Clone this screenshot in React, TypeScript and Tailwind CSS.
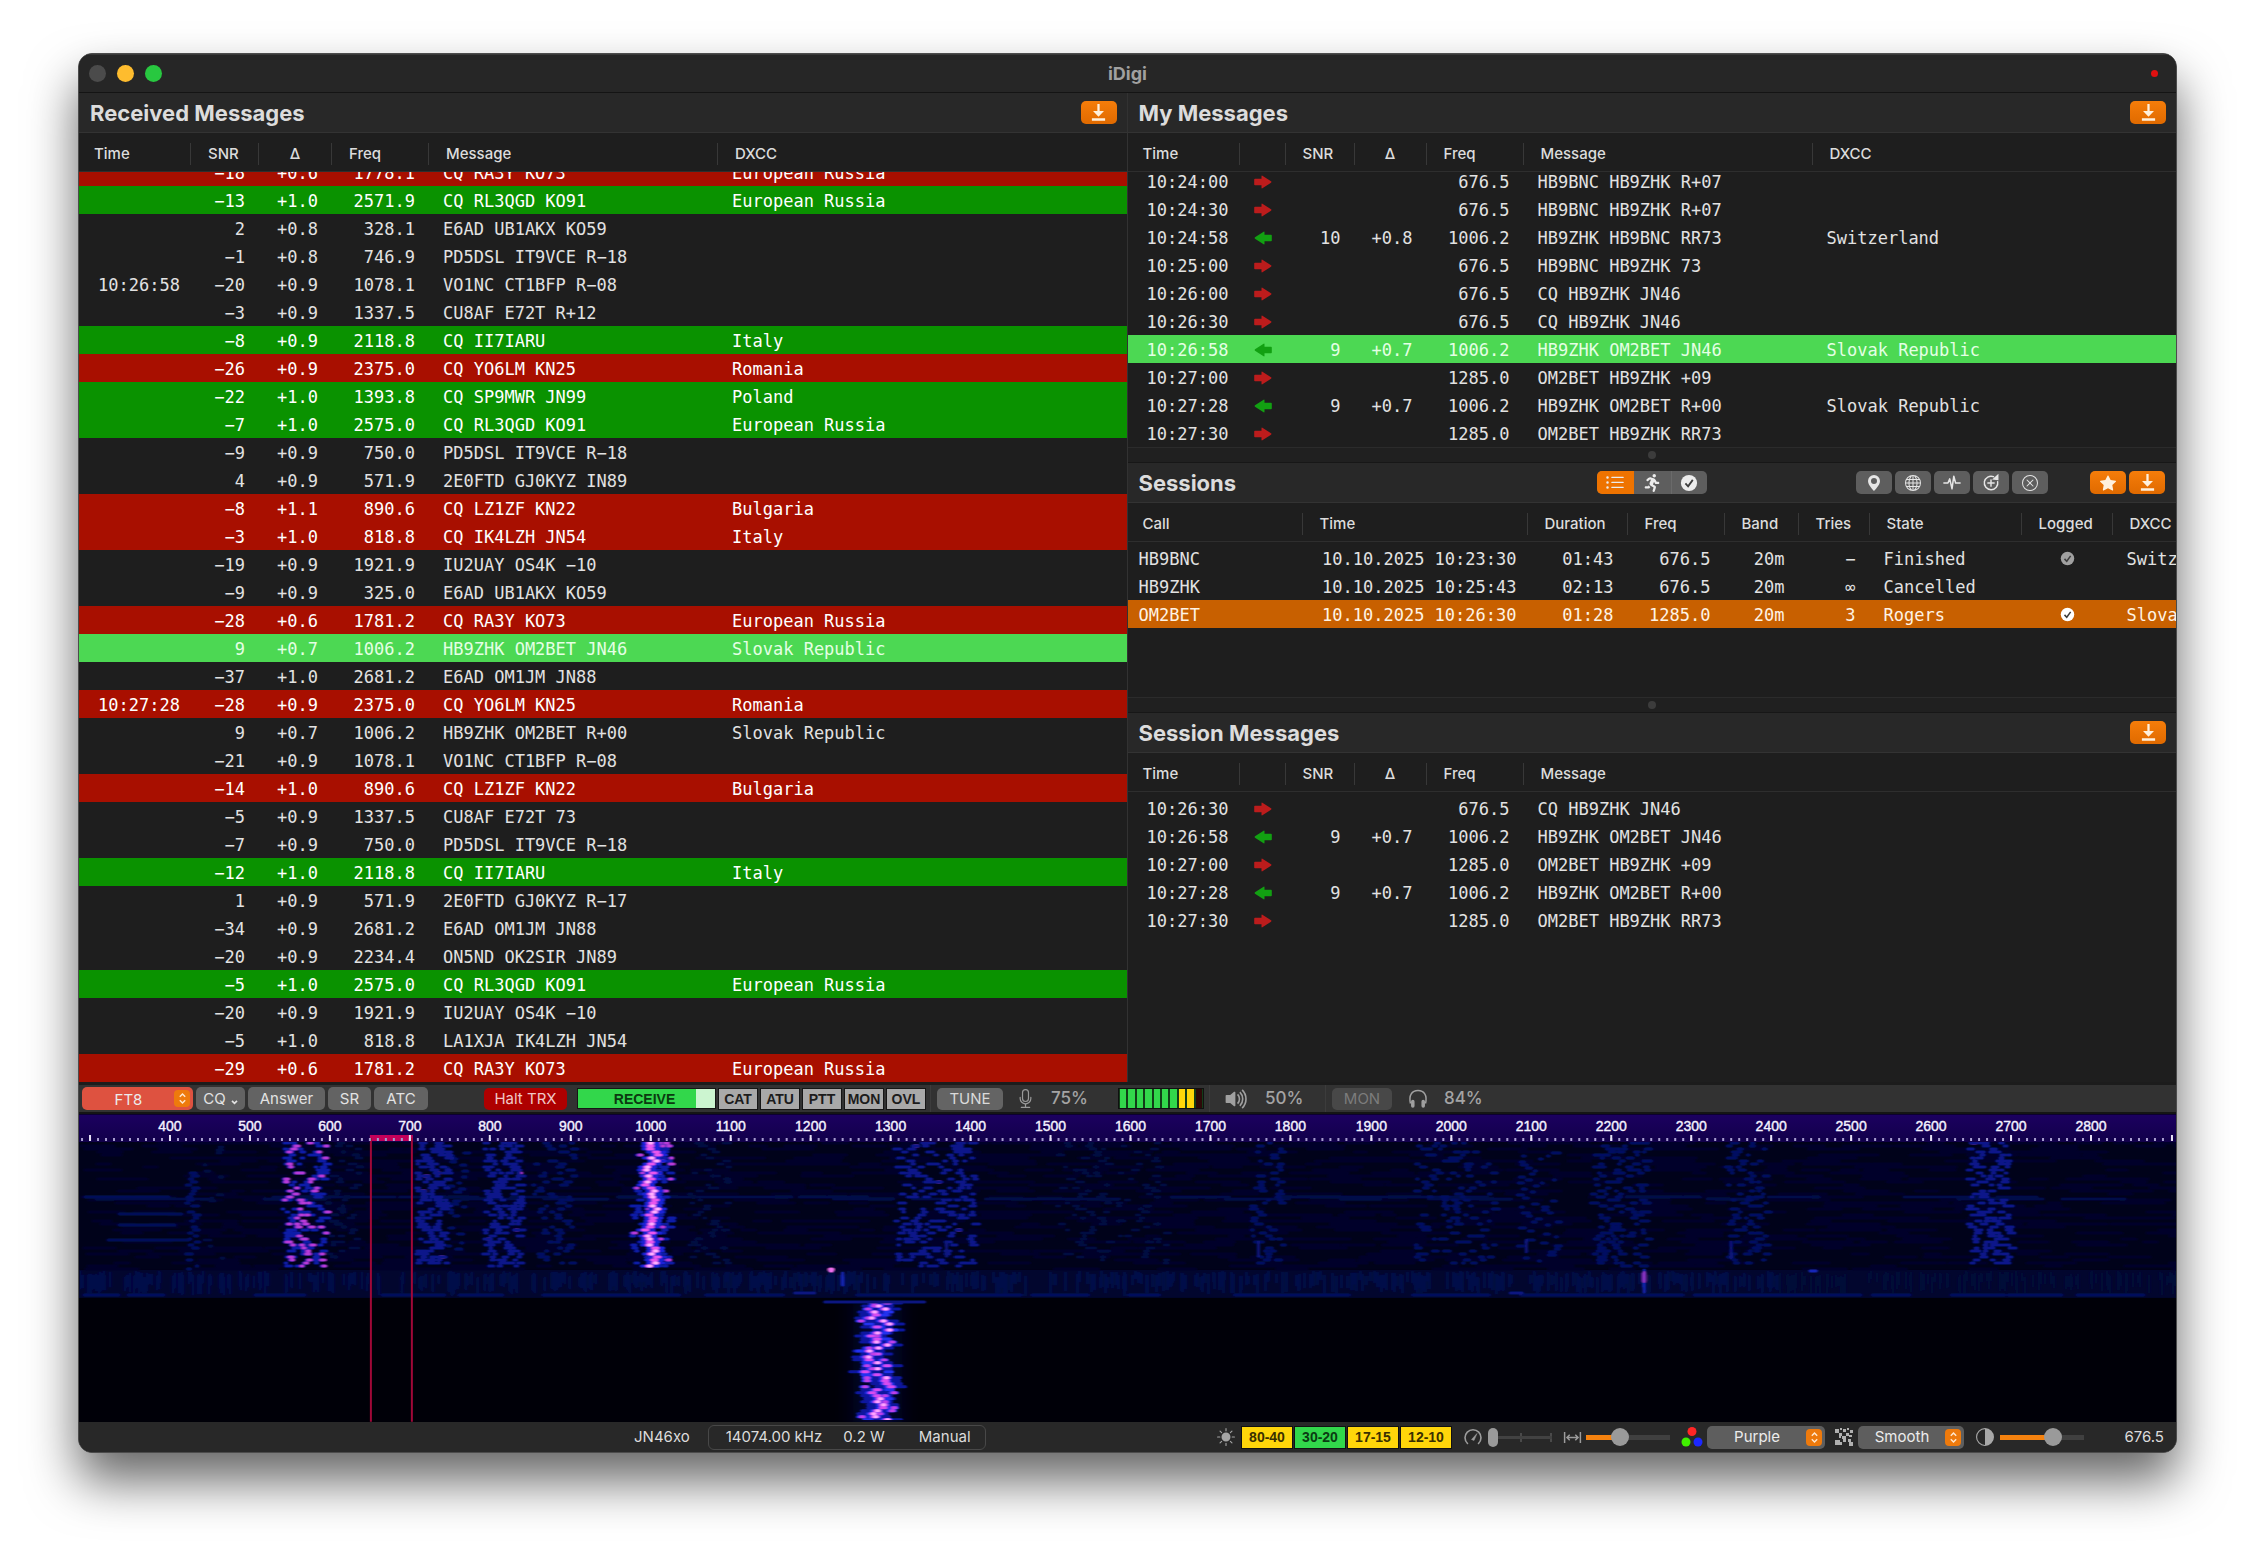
import { useState } from "react";
import type { ReactNode } from "react";
import {
  BsCircleHalf,
  BsGeoAltFill,
  BsGlobe,
  BsListUl,
  BsMic,
  BsStarFill,
  BsSunFill,
  BsVolumeUpFill,
  BsXCircle,
} from "react-icons/bs";
import { FaRunning } from "react-icons/fa";

type Tone = "red" | "green" | "active" | "orange" | "none";

const toneClass: Record<Tone, string> = {
  red: "bg-[#a80f00] text-white",
  green: "bg-[#0a9200] text-white",
  active: "bg-[#4cd853] text-[#e4ffe4]",
  orange: "bg-[#c86000] text-[#fff3e4]",
  none: "text-[#e2e2e2]",
};

interface Received {
  time?: string;
  snr: string;
  delta: string;
  freq: string;
  message: string;
  dxcc?: string;
  tone?: Tone;
}

const received: Received[] = [
  { snr: "−18", delta: "+0.6", freq: "1778.1", message: "CQ RA3Y KO73", dxcc: "European Russia", tone: "red" },
  { snr: "−13", delta: "+1.0", freq: "2571.9", message: "CQ RL3QGD KO91", dxcc: "European Russia", tone: "green" },
  { snr: "2", delta: "+0.8", freq: "328.1", message: "E6AD UB1AKX KO59" },
  { snr: "−1", delta: "+0.8", freq: "746.9", message: "PD5DSL IT9VCE R−18" },
  { time: "10:26:58", snr: "−20", delta: "+0.9", freq: "1078.1", message: "VO1NC CT1BFP R−08" },
  { snr: "−3", delta: "+0.9", freq: "1337.5", message: "CU8AF E72T R+12" },
  { snr: "−8", delta: "+0.9", freq: "2118.8", message: "CQ II7IARU", dxcc: "Italy", tone: "green" },
  { snr: "−26", delta: "+0.9", freq: "2375.0", message: "CQ YO6LM KN25", dxcc: "Romania", tone: "red" },
  { snr: "−22", delta: "+1.0", freq: "1393.8", message: "CQ SP9MWR JN99", dxcc: "Poland", tone: "green" },
  { snr: "−7", delta: "+1.0", freq: "2575.0", message: "CQ RL3QGD KO91", dxcc: "European Russia", tone: "green" },
  { snr: "−9", delta: "+0.9", freq: "750.0", message: "PD5DSL IT9VCE R−18" },
  { snr: "4", delta: "+0.9", freq: "571.9", message: "2E0FTD GJ0KYZ IN89" },
  { snr: "−8", delta: "+1.1", freq: "890.6", message: "CQ LZ1ZF KN22", dxcc: "Bulgaria", tone: "red" },
  { snr: "−3", delta: "+1.0", freq: "818.8", message: "CQ IK4LZH JN54", dxcc: "Italy", tone: "red" },
  { snr: "−19", delta: "+0.9", freq: "1921.9", message: "IU2UAY OS4K −10" },
  { snr: "−9", delta: "+0.9", freq: "325.0", message: "E6AD UB1AKX KO59" },
  { snr: "−28", delta: "+0.6", freq: "1781.2", message: "CQ RA3Y KO73", dxcc: "European Russia", tone: "red" },
  { snr: "9", delta: "+0.7", freq: "1006.2", message: "HB9ZHK OM2BET JN46", dxcc: "Slovak Republic", tone: "active" },
  { snr: "−37", delta: "+1.0", freq: "2681.2", message: "E6AD OM1JM JN88" },
  { time: "10:27:28", snr: "−28", delta: "+0.9", freq: "2375.0", message: "CQ YO6LM KN25", dxcc: "Romania", tone: "red" },
  { snr: "9", delta: "+0.7", freq: "1006.2", message: "HB9ZHK OM2BET R+00", dxcc: "Slovak Republic" },
  { snr: "−21", delta: "+0.9", freq: "1078.1", message: "VO1NC CT1BFP R−08" },
  { snr: "−14", delta: "+1.0", freq: "890.6", message: "CQ LZ1ZF KN22", dxcc: "Bulgaria", tone: "red" },
  { snr: "−5", delta: "+0.9", freq: "1337.5", message: "CU8AF E72T 73" },
  { snr: "−7", delta: "+0.9", freq: "750.0", message: "PD5DSL IT9VCE R−18" },
  { snr: "−12", delta: "+1.0", freq: "2118.8", message: "CQ II7IARU", dxcc: "Italy", tone: "green" },
  { snr: "1", delta: "+0.9", freq: "571.9", message: "2E0FTD GJ0KYZ R−17" },
  { snr: "−34", delta: "+0.9", freq: "2681.2", message: "E6AD OM1JM JN88" },
  { snr: "−20", delta: "+0.9", freq: "2234.4", message: "ON5ND OK2SIR JN89" },
  { snr: "−5", delta: "+1.0", freq: "2575.0", message: "CQ RL3QGD KO91", dxcc: "European Russia", tone: "green" },
  { snr: "−20", delta: "+0.9", freq: "1921.9", message: "IU2UAY OS4K −10" },
  { snr: "−5", delta: "+1.0", freq: "818.8", message: "LA1XJA IK4LZH JN54" },
  { snr: "−29", delta: "+0.6", freq: "1781.2", message: "CQ RA3Y KO73", dxcc: "European Russia", tone: "red" },
];

interface Exchange {
  time: string;
  sent: boolean;
  snr?: string;
  delta?: string;
  freq: string;
  message: string;
  dxcc?: string;
  tone?: Tone;
}

const myMessages: Exchange[] = [
  { time: "10:24:00", sent: true, freq: "676.5", message: "HB9BNC HB9ZHK R+07" },
  { time: "10:24:30", sent: true, freq: "676.5", message: "HB9BNC HB9ZHK R+07" },
  { time: "10:24:58", sent: false, snr: "10", delta: "+0.8", freq: "1006.2", message: "HB9ZHK HB9BNC RR73", dxcc: "Switzerland" },
  { time: "10:25:00", sent: true, freq: "676.5", message: "HB9BNC HB9ZHK 73" },
  { time: "10:26:00", sent: true, freq: "676.5", message: "CQ HB9ZHK JN46" },
  { time: "10:26:30", sent: true, freq: "676.5", message: "CQ HB9ZHK JN46" },
  { time: "10:26:58", sent: false, snr: "9", delta: "+0.7", freq: "1006.2", message: "HB9ZHK OM2BET JN46", dxcc: "Slovak Republic", tone: "active" },
  { time: "10:27:00", sent: true, freq: "1285.0", message: "OM2BET HB9ZHK +09" },
  { time: "10:27:28", sent: false, snr: "9", delta: "+0.7", freq: "1006.2", message: "HB9ZHK OM2BET R+00", dxcc: "Slovak Republic" },
  { time: "10:27:30", sent: true, freq: "1285.0", message: "OM2BET HB9ZHK RR73" },
];

const sessionMessages: Exchange[] = [
  { time: "10:26:30", sent: true, freq: "676.5", message: "CQ HB9ZHK JN46" },
  { time: "10:26:58", sent: false, snr: "9", delta: "+0.7", freq: "1006.2", message: "HB9ZHK OM2BET JN46" },
  { time: "10:27:00", sent: true, freq: "1285.0", message: "OM2BET HB9ZHK +09" },
  { time: "10:27:28", sent: false, snr: "9", delta: "+0.7", freq: "1006.2", message: "HB9ZHK OM2BET R+00" },
  { time: "10:27:30", sent: true, freq: "1285.0", message: "OM2BET HB9ZHK RR73" },
];

interface Session {
  call: string;
  time: string;
  duration: string;
  freq: string;
  tries: string;
  state: string;
  logged: boolean;
  dxcc: string;
  tone?: Tone;
}

const sessions: Session[] = [
  { call: "HB9BNC", time: "10.10.2025 10:23:30", duration: "01:43", freq: "676.5", tries: "−", state: "Finished", logged: true, dxcc: "Switzerland" },
  { call: "HB9ZHK", time: "10.10.2025 10:25:43", duration: "02:13", freq: "676.5", tries: "∞", state: "Cancelled", logged: false, dxcc: "" },
  { call: "OM2BET", time: "10.10.2025 10:26:30", duration: "01:28", freq: "1285.0", tries: "3", state: "Rogers", logged: true, dxcc: "Slovak Republic", tone: "orange" },
];

const receivedCols = "grid-cols-[112px_68px_73px_97px_289px_minmax(0,1fr)]";
const exchangeCols = "grid-cols-[112px_46px_69px_72px_97px_289px_minmax(0,1fr)]";
const sessionMessageCols = "grid-cols-[112px_46px_69px_72px_97px_minmax(0,1fr)]";
const sessionCols = "grid-cols-[175px_225px_100px_97px_74px_71px_152px_91px_minmax(0,1fr)]";

export default function App() {
  return (
    <main className="flex h-screen bg-white pt-[53px] pr-[83px] pb-[111px] pl-[78px] font-[Inter,'Open_Sans',sans-serif] text-[#dcdcdc]">
      <div className="flex min-w-0 flex-1 flex-col overflow-hidden rounded-[14px] border border-[#4c4c4c] bg-[#1e1e1e] shadow-[0_28px_50px_rgba(0,0,0,0.6)]">
        <TitleBar />
        <div className="grid min-h-0 flex-1 grid-cols-2">
          <section className="flex min-h-0 min-w-0 flex-col border-r border-[#323232]">
            <SectionHeader title="Received Messages" />
            <MessageTable columns={receivedCols} headings={["Time", "SNR", "Δ", "Freq", "Message", "DXCC"]} stickToEnd>
              {received.map((row, i) => (
                <Row key={i} columns={receivedCols} tone={row.tone}>
                  <Cell align="right" tight>{row.time}</Cell>
                  <Cell align="right">{row.snr}</Cell>
                  <Cell align="right">{row.delta}</Cell>
                  <Cell align="right">{row.freq}</Cell>
                  <Cell>{row.message}</Cell>
                  <Cell>{row.dxcc}</Cell>
                </Row>
              ))}
            </MessageTable>
          </section>

          <div className="flex min-h-0 min-w-0 flex-col">
            <section className="flex h-[354px] flex-col">
              <SectionHeader title="My Messages" />
              <MessageTable columns={exchangeCols} headings={["Time", "", "SNR", "Δ", "Freq", "Message", "DXCC"]} stickToEnd>
                {myMessages.map((row) => (
                  <ExchangeRow key={row.time} row={row} columns={exchangeCols} showDxcc />
                ))}
              </MessageTable>
            </section>
            <Splitter />
            <section className="flex h-[234px] flex-col">
              <SessionsHeader />
              <MessageTable
                columns={sessionCols}
                headings={["Call", "Time", "Duration", "Freq", "Band", "Tries", "State", "Logged", "DXCC"]}
              >
                {sessions.map((row) => (
                  <Row key={row.call} columns={sessionCols} tone={row.tone}>
                    <Cell tight>{row.call}</Cell>
                    <Cell align="right" tight>{row.time}</Cell>
                    <Cell align="right">{row.duration}</Cell>
                    <Cell align="right">{row.freq}</Cell>
                    <Cell align="right">20m</Cell>
                    <Cell align="right">{row.tries}</Cell>
                    <Cell>{row.state}</Cell>
                    <Cell align="center">
                      {row.logged && (
                        <CheckBadge className={row.tone === "orange" ? "size-[15px] text-white" : "size-[15px] text-[#a0a0a0]"} />
                      )}
                    </Cell>
                    <Cell>{row.dxcc}</Cell>
                  </Row>
                ))}
              </MessageTable>
            </section>
            <Splitter />
            <section className="flex min-h-0 flex-1 flex-col">
              <SectionHeader title="Session Messages" />
              <MessageTable columns={sessionMessageCols} headings={["Time", "", "SNR", "Δ", "Freq", "Message"]}>
                {sessionMessages.map((row) => (
                  <ExchangeRow key={row.time} row={row} columns={sessionMessageCols} />
                ))}
              </MessageTable>
            </section>
          </div>
        </div>
        <Toolbar />
        <Waterfall />
        <StatusBar />
      </div>
    </main>
  );
}

function TitleBar() {
  return (
    <header className="grid h-[39px] shrink-0 grid-cols-3 items-center border-t border-b border-t-[#3a3a3a] border-b-[#141414] bg-[#262626] px-[10px]">
      <div className="flex gap-[11px]">
        <button aria-label="Close" className="size-[17px] rounded-full bg-[#4b4b4b]" />
        <button aria-label="Minimise" className="size-[17px] rounded-full bg-[#febc2e]" />
        <button aria-label="Zoom" className="size-[17px] rounded-full bg-[#28c840]" />
      </div>
      <h1 className="text-center text-[18px] leading-5 font-bold text-[#a0a0a0]">iDigi</h1>
      <span className="mr-2 size-[7px] justify-self-end rounded-full bg-[#e01010]" />
    </header>
  );
}

function SectionHeader({ title }: { title: string }) {
  return (
    <header className="flex h-[40px] shrink-0 items-center justify-between border-b border-[#333] bg-[#282828] pr-[10px] pl-[11px]">
      <h2 className="text-[22px] leading-7 font-bold">{title}</h2>
      <ToolButton label={`Scroll ${title} to end`} active>
        <ArrowToLine />
      </ToolButton>
    </header>
  );
}

function SessionsHeader() {
  return (
    <header className="grid h-[40px] shrink-0 grid-cols-[1fr_auto_1fr] items-center border-b border-[#333] bg-[#282828] pr-[11px] pl-[11px]">
      <h2 className="text-[22px] leading-7 font-bold">Sessions</h2>
      <div className="flex h-[23px] overflow-hidden rounded-[5px] bg-[#5e5e5e] text-[#ececec]">
        <button aria-label="All sessions" className="grid w-[37px] place-items-center bg-[#ee7300]">
          <BsListUl className="size-5" />
        </button>
        <button aria-label="Running" className="grid w-[37px] place-items-center">
          <FaRunning className="size-[18px]" />
        </button>
        <button aria-label="Completed" className="grid w-[36px] place-items-center border-l border-[#6a6a6a]">
          <CheckBadge className="size-[18px]" />
        </button>
      </div>
      <div className="flex justify-end gap-[3px]">
        <ToolButton label="Locator">
          <BsGeoAltFill className="size-4" />
        </ToolButton>
        <ToolButton label="World">
          <BsGlobe className="size-4" />
        </ToolButton>
        <ToolButton label="Signal">
          <Pulse />
        </ToolButton>
        <ToolButton label="Repeat">
          <RepeatPlus />
        </ToolButton>
        <ToolButton label="Cancel">
          <BsXCircle className="size-4" />
        </ToolButton>
        <span className="w-[36px]" />
        <ToolButton label="Favourites" active>
          <BsStarFill className="size-4" />
        </ToolButton>
        <ToolButton label="Scroll Sessions to end" active>
          <ArrowToLine />
        </ToolButton>
      </div>
    </header>
  );
}

interface ToolButtonProps {
  label: string;
  active?: boolean;
  children: ReactNode;
}

function ToolButton({ label, active, children }: ToolButtonProps) {
  return (
    <button
      aria-label={label}
      className={`grid h-[23px] w-[36px] place-items-center rounded-[5px] ${
        active ? "bg-linear-to-b from-[#f57d0a] to-[#e06a00] text-[#fff0dc]" : "bg-[#5e5e5e] text-[#e6e6e6]"
      }`}
    >
      {children}
    </button>
  );
}

function Splitter() {
  return (
    <div className="grid h-[16px] shrink-0 place-items-center border-t border-b border-t-[#2b2b2b] border-b-[#171717] bg-[#202020]">
      <span className="size-2 rounded-full bg-[#3c3c3c]" />
    </div>
  );
}

interface MessageTableProps {
  columns: string;
  headings: string[];
  stickToEnd?: boolean;
  children: ReactNode;
}

function MessageTable({ columns, headings, stickToEnd, children }: MessageTableProps) {
  return (
    <table className="flex min-h-0 flex-1 flex-col">
      <thead className="block shrink-0 border-b border-[#2e2e2e]">
        <tr className={`grid h-[38px] items-center pt-[3px] ${columns}`}>
          {headings.map((heading, i) => (
            <th
              key={i}
              className={`h-[22px] overflow-hidden border-r border-[#383838] text-[15px] leading-[22px] font-medium whitespace-nowrap last:border-r-0 ${
                heading === "Δ" ? "text-center" : "pl-[17px] text-left first:pl-[15px]"
              }`}
            >
              {heading}
            </th>
          ))}
        </tr>
      </thead>
      <tbody
        className={`flex min-h-0 flex-1 flex-col overflow-hidden font-['DejaVu_Sans_Mono','Liberation_Mono',monospace] text-[17px] leading-7 ${
          stickToEnd ? "justify-end" : "pt-[2px]"
        }`}
      >
        {children}
      </tbody>
    </table>
  );
}

interface RowProps {
  columns: string;
  tone?: Tone;
  children: ReactNode;
}

function Row({ columns, tone = "none", children }: RowProps) {
  return <tr className={`grid h-7 shrink-0 ${columns} ${toneClass[tone]}`}>{children}</tr>;
}

interface CellProps {
  align?: "left" | "right" | "center";
  tight?: boolean;
  children?: ReactNode;
}

function Cell({ align = "left", tight, children }: CellProps) {
  if (align === "center") {
    return <td className="grid place-items-center">{children}</td>;
  }
  if (align === "right") {
    return <td className={`pt-px text-right whitespace-nowrap ${tight ? "pr-[11px]" : "pr-[14px]"}`}>{children}</td>;
  }
  return (
    <td className={`overflow-hidden pt-px whitespace-nowrap ${tight ? "pl-[11px]" : "pl-[14px]"}`}>{children}</td>
  );
}

interface ExchangeRowProps {
  row: Exchange;
  columns: string;
  showDxcc?: boolean;
}

function ExchangeRow({ row, columns, showDxcc }: ExchangeRowProps) {
  return (
    <Row columns={columns} tone={row.tone}>
      <Cell align="right" tight>{row.time}</Cell>
      <Cell align="center">
        <svg
          viewBox="0 0 18 14"
          className={`h-[14px] w-[18px] fill-current ${row.sent ? "text-[#bc1c1c]" : "-scale-x-100 text-[#12a012]"}`}
        >
          <path d="M1 3.800h6.500V1.200q0-.9.900-.5L17 6.300q.9.700 0 1.400L8.400 13.300q-.9.400-.9-.5V10.200H1q-.8 0-.8-.8V4.600Q.2 3.800 1 3.800z" />
        </svg>
      </Cell>
      <Cell align="right">{row.snr}</Cell>
      <Cell align="right">{row.delta}</Cell>
      <Cell align="right">{row.freq}</Cell>
      <Cell>{row.message}</Cell>
      {showDxcc && <Cell>{row.dxcc}</Cell>}
    </Row>
  );
}

const lamps = ["CAT", "ATU", "PTT", "MON", "OVL"];

function Toolbar() {
  return (
    <div className="flex h-[32px] shrink-0 items-center border-t-[3px] border-b-2 border-t-[#1c1c1c] border-b-[#151515] bg-[#323232] pl-[3px] whitespace-nowrap">
      <PopUp label="Mode" options={["FT8", "FT4"]} className="w-[111px] bg-[#de5240]" />
      <div className="ml-[3px] flex gap-[3px]">
        <PushButton className="w-[49px]">
          <span>CQ</span>
          <svg viewBox="0 0 8 6" className="mt-2 ml-[5px] h-[5px] w-[7px] fill-none stroke-current stroke-2">
            <path d="M1 1l3 3 3-3" />
          </svg>
        </PushButton>
        <PushButton className="w-[77px]">Answer</PushButton>
        <PushButton className="w-[43px]">SR</PushButton>
        <PushButton className="w-[54px]">ATC</PushButton>
      </div>
      <button className="ml-[56px] h-[22px] w-[83px] rounded-[5px] bg-[#ae0000] text-[15px] leading-[22px] text-[#f0c8c8]">
        Halt TRX
      </button>
      <div className="ml-[10px] flex h-[21px] w-[139px] border border-[#161616] bg-linear-to-r from-[#32d74b] from-86% to-[#ccf5d0] to-86% font-['Liberation_Sans',Arial,sans-serif] text-[14px] leading-5 font-bold text-[#0b3a10]">
        <span className="w-full pr-1 text-center">RECEIVE</span>
      </div>
      <div className="ml-[2px] flex gap-[2px]">
        {lamps.map((lamp) => (
          <span
            key={lamp}
            className="h-[22px] w-10 border border-[#161616] bg-[#a9a9a9] text-center font-['Liberation_Sans',Arial,sans-serif] text-[14px] leading-5 font-bold text-[#1c1c1c]"
          >
            {lamp}
          </span>
        ))}
      </div>
      <Divider className="ml-1" />
      <button className="ml-[6px] h-[22px] w-[66px] rounded-[5px] bg-[#646464] text-[15px] leading-[22px] text-[#dadada]">
        TUNE
      </button>
      <BsMic className="ml-[13px] size-[19px] text-[#9a9a9a]" />
      <span className="ml-[16px] w-[61px] text-[17px] font-medium text-[#a4a4a4]">75%</span>
      <LevelMeter />
      <Divider className="ml-[5px]" />
      <BsVolumeUpFill className="ml-[14px] size-[26px] text-[#a0a0a0]" />
      <span className="ml-[15px] w-[60px] text-[17px] font-medium text-[#a4a4a4]">50%</span>
      <Divider />
      <button
        disabled
        className="ml-[6px] h-[22px] w-[60px] rounded-[5px] bg-[#484848] text-[15px] leading-[22px] text-[#7c7c7c]"
      >
        MON
      </button>
      <svg viewBox="0 0 20 20" className="ml-4 size-5 fill-none stroke-[#a0a0a0] stroke-[1.500]">
        <path d="M2.500 14.500C.5 6 4 1.500 10 1.500s9.500 4.500 7.500 13" />
        <rect x="3.800" y="11.500" width="2" height="6.500" rx="1" className="fill-[#a0a0a0]" />
        <rect x="14.200" y="11.500" width="2" height="6.500" rx="1" className="fill-[#a0a0a0]" />
      </svg>
      <span className="ml-4 text-[17px] font-medium text-[#a4a4a4]">84%</span>
    </div>
  );
}

function Divider({ className = "" }: { className?: string }) {
  return <span className={`h-full w-px bg-[#3c3c3c] ${className}`} />;
}

const meterColors = [
  ...Array<string>(7).fill("bg-[#32d74b]"),
  "bg-[#ffd60a]",
  "bg-[#ffd60a]",
  "bg-[#2c0808]",
];

function LevelMeter() {
  return (
    <div className="ml-[6px] grid h-[21px] w-[86px] grid-cols-10 gap-[2px] border border-[#101010] bg-[#123c18] px-px">
      {meterColors.map((color, i) => (
        <span key={i} className={color} />
      ))}
    </div>
  );
}

function PushButton({ className, children }: { className: string; children: ReactNode }) {
  return (
    <button
      className={`flex h-[23px] items-center justify-center rounded-[5px] bg-[#636363] text-[15px] leading-[22px] text-[#e2e2e2] ${className}`}
    >
      {children}
    </button>
  );
}

interface PopUpProps {
  label: string;
  options: string[];
  className: string;
}

function PopUp({ label, options, className }: PopUpProps) {
  return (
    <div className={`relative h-[23px] rounded-[5px] ${className}`}>
      <select
        aria-label={label}
        className="h-full w-full appearance-none bg-transparent pr-[18px] text-center text-[15px] leading-[22px] text-[#ececec]"
      >
        {options.map((option) => (
          <option key={option}>{option}</option>
        ))}
      </select>
      <span className="pointer-events-none absolute inset-y-[3px] right-[3px] grid w-[16px] place-items-center rounded-[4px] bg-[#ee7a0c]">
        <svg viewBox="0 0 10 14" className="h-[13px] w-[9px] fill-none stroke-[#ffe8d0] stroke-[1.600]">
          <path d="M2 5l3-3 3 3M2 9l3 3 3-3" />
        </svg>
      </span>
    </div>
  );
}

// The spectrum covers 286 Hz to 2905 Hz, drawn at 0.801 units per hertz.
const hzToX = (hz: number) => 91 + (hz - 400) * 0.801;

interface Signal {
  from: number;
  to: number;
  top: number;
  bottom: number;
  density: number;
  level: "faint" | "weak" | "medium" | "strong";
  pink?: number;
}

const signals: Signal[] = [
  { from: 109, to: 119, top: 30, bottom: 130, density: 0.8, level: "weak" },
  { from: 122, to: 146, top: 4, bottom: 124, density: 0.4, level: "faint" },
  { from: 205, to: 247, top: 0, bottom: 127, density: 4, level: "strong", pink: 0.34 },
  { from: 249, to: 282, top: 0, bottom: 118, density: 1.2, level: "faint" },
  { from: 339, to: 370, top: 0, bottom: 124, density: 4, level: "medium", pink: 0.01 },
  { from: 368, to: 388, top: 10, bottom: 110, density: 0.8, level: "weak" },
  { from: 406, to: 443, top: 0, bottom: 126, density: 4, level: "medium", pink: 0.01 },
  { from: 456, to: 496, top: 0, bottom: 124, density: 1.8, level: "weak" },
  { from: 553, to: 592, top: 0, bottom: 127, density: 3, level: "strong", pink: 0.2 },
  { from: 610, to: 650, top: 0, bottom: 124, density: 1.2, level: "faint" },
  { from: 817, to: 897, top: 0, bottom: 126, density: 5, level: "medium", pink: 0.03 },
  { from: 980, to: 1032, top: 0, bottom: 120, density: 1.6, level: "faint" },
  { from: 1040, to: 1090, top: 0, bottom: 122, density: 1.2, level: "faint" },
  { from: 1173, to: 1206, top: 0, bottom: 122, density: 1.6, level: "weak" },
  { from: 1338, to: 1416, top: 0, bottom: 124, density: 3, level: "weak" },
  { from: 1440, to: 1480, top: 10, bottom: 122, density: 1.3, level: "weak" },
  { from: 1514, to: 1570, top: 0, bottom: 126, density: 3.6, level: "weak" },
  { from: 1648, to: 1690, top: 0, bottom: 122, density: 2.2, level: "weak" },
  { from: 1891, to: 1933, top: 0, bottom: 124, density: 3.4, level: "medium", pink: 0.01 },
];

const levelColor = {
  faint: "#040a42",
  weak: "#061062",
  medium: "#08188a",
  strong: "#0c1ca8",
};

function createRandom(seed: number) {
  let state = seed;
  return () => {
    state = (state + 0x6d2b79f5) | 0;
    let t = Math.imul(state ^ (state >>> 15), 1 | state);
    t = (t + Math.imul(t ^ (t >>> 7), 61 | t)) ^ t;
    return ((t ^ (t >>> 14)) >>> 0) / 4294967296;
  };
}

const dash = (x: number, y: number, w: number) => `M${Math.round(x)} ${Math.round(y)}h${Math.round(w)}`;

function buildWaterfall() {
  const random = createRandom(73);
  const layers = new Map<string, string>();
  const add = (color: string, d: string) => {
    layers.set(color, (layers.get(color) ?? "") + d);
  };

  // Each row of the history is 3 units high.
  for (let y = 1; y < 128; y += 3) {
    for (let i = 0; i < 34; i++) add("#02042a", dash(random() * 2098, y, 12 + random() * 40));
  }
  // Noise floor between two slots.
  for (let i = 0; i < 700; i++) {
    const x = random() * 2098;
    const y = 130 + random() * 6;
    add(x < 1700 ? "#040b48" : "#030838", `M${Math.round(x)} ${Math.round(y)}v${Math.round(6 + random() * 12)}`);
  }
  for (let i = 0; i < 60; i++) add("#050e5c", dash(random() * 2060, 153, 20 + random() * 40));
  for (let i = 0; i < 40; i++) add("#040b48", dash(random() * 2060, 55 + (i % 2) * 2, 30 + random() * 60));
  for (const y of [55, 72, 83, 98]) {
    for (let i = 0; i < 4; i++) add("#050e58", dash(random() * 80, y, 20 + random() * 20));
  }

  for (const s of signals) {
    for (let y = s.top + 1; y < s.bottom; y += 3) {
      for (let i = 0; i < s.density; i++) {
        if (random() > s.density - i) continue;
        const x = s.from + random() * (s.to - s.from);
        add(levelColor[s.level], dash(x - 2, y, 2 + random() * 5));
        if (s.pink && random() < s.pink) add("#b83ad8", dash(x, y, 2 + random() * 2));
      }
    }
  }
  // Carrier of the station being worked.
  for (let y = 1; y < 127; y += 3) {
    const carrier = 573 + Math.sin(y / 8) * 3 + (random() - 0.5) * 8;
    add("#1a24d8", dash(carrier - 8, y, 16));
    add("#ea56ee", dash(carrier - 3, y, 5));
    if (random() > 0.4) add("#ffb4ff", dash(carrier - 1, y, 2));
  }
  // Own transmission.
  let tone = 796;
  for (let y = 161; y < 280; y += 3) {
    tone += (random() - 0.5) * 24;
    if (tone < 784 || tone > 812) tone = 798;
    const side = 782 + random() * 34;
    add("#0a18a0", dash(tone - 15, y, 30));
    add("#2430f0", dash(tone - 5, y, 10) + dash(side - 4, y, 8));
    add("#d84cf0", dash(tone - 2, y, 5));
    if (random() > 0.4) add("#c040e8", dash(side - 1, y, 3));
    if (random() > 0.6) add("#ffa8ff", dash(tone, y, 2));
  }
  return [...layers.entries()];
}

const waterfallLayers = buildWaterfall();
const majorMarks = Array.from({ length: 25 }, (_, i) => 400 + i * 100);
const minorTicks = Array.from({ length: 262 }, (_, i) => 290 + i * 10);

function Waterfall() {
  return (
    <svg viewBox="0 0 2098 308" className="block w-full shrink-0 bg-[#000008]" role="img" aria-label="Waterfall">
      <defs>
        <filter id="soft" x="0" y="0" width="100%" height="100%">
          <feGaussianBlur stdDeviation="1.200 0.700" />
        </filter>
        <filter id="halo" x="-100%" y="-10%" width="300%" height="120%">
          <feGaussianBlur stdDeviation="14 3" />
        </filter>
        <linearGradient id="ruler" x1="0" y1="0" x2="0" y2="1">
          <stop offset="0" stopColor="#1c0060" />
          <stop offset="1" stopColor="#11004a" />
        </linearGradient>
      </defs>
      <g transform="translate(0 28)">
        <rect width="2098" height="128" fill="#00021a" />
        <rect y="128" width="2098" height="28" fill="#02062e" />
        <rect x="784" y="160" width="30" height="124" fill="#0818a0" opacity="0.45" filter="url(#halo)" />
        <g filter="url(#soft)" fill="none" strokeWidth="3" strokeLinecap="round">
          {waterfallLayers.map(([color, d]) => (
            <path key={color} stroke={color} d={d} />
          ))}
          <path stroke="#1828b8" d="M764 131v12M1732 129h6M1566 128v22" />
          <path stroke="#0a1880" d="M1180 100v14M1448 98v12M1653 100v16M868 100v14M1432 151h12M746 160h100M716 151h20" />
          <path stroke="#f070f0" strokeWidth="5" d="M752 128h1" />
          <path stroke="#8c34c8" strokeWidth="4" d="M1566 131v8" />
        </g>
      </g>
      <rect width="2098" height="28" fill="url(#ruler)" />
      <rect y="0" width="2098" height="1" fill="#0c0030" />
      <rect x="291" y="21" width="43" height="6" fill="#c4005a" />
      <path d="M292 24V308M333 24V308" stroke="#a00838" strokeWidth="2" fill="none" />
      <path
        d={minorTicks.map((hz) => `M${hzToX(hz).toFixed(0)} 24v3`).join("")}
        stroke="#a79cd0"
        strokeWidth="2"
      />
      <path
        d={[300, ...majorMarks, 2900].map((hz) => `M${hzToX(hz).toFixed(0)} 21v6`).join("")}
        stroke="#e6e0f6"
        strokeWidth="2"
      />
      <g
        className="font-['Liberation_Sans',Arial,sans-serif] text-[14px]"
        fill="#f4f2ff"
        stroke="#f4f2ff"
        strokeWidth="0.400"
        textAnchor="middle"
      >
        {majorMarks.map((hz) => (
          <text key={hz} x={Math.round(hzToX(hz))} y="17">
            {hz}
          </text>
        ))}
      </g>
    </svg>
  );
}

const bands = [
  { name: "80-40", className: "bg-[#ffd60a] text-[#3a3000]" },
  { name: "30-20", className: "bg-[#32d74b] text-[#0a3c12]" },
  { name: "17-15", className: "bg-[#ffd60a] text-[#3a3000]" },
  { name: "12-10", className: "bg-[#ffd60a] text-[#3a3000]" },
];

function StatusBar() {
  return (
    <footer className="flex h-[30px] shrink-0 items-center bg-[#282828] pr-3 text-[15px] whitespace-nowrap">
      <div className="grow-[12]" />
      <span>JN46xo</span>
      <div className="ml-[18px] flex h-[25px] w-[278px] items-center rounded-[6px] border border-[#484848] pl-[17px]">
        <span>14074.00 kHz</span>
        <span className="ml-[21px]">0.2 W</span>
        <span className="ml-[34px]">Manual</span>
      </div>
      <div className="grow-[5]" />
      <BsSunFill className="mr-[6px] size-[18px] text-[#a4a4a4]" />
      <div className="flex gap-px">
        {bands.map((band) => (
          <span
            key={band.name}
            className={`h-[23px] w-[52px] border border-[#111] text-center font-['Liberation_Sans',Arial,sans-serif] text-[14px] leading-[21px] font-bold ${band.className}`}
          >
            {band.name}
          </span>
        ))}
      </div>
      <svg viewBox="0 0 20 18" className="ml-[11px] h-[18px] w-5 fill-none stroke-[#9c9c9c] stroke-[1.600]">
        <path d="M4.500 15.500A8 8 0 1 1 15.500 15.500" strokeLinecap="round" />
        <path d="M8.500 11.500L14 5.500 11 12.500z" className="fill-[#9c9c9c]" strokeWidth="0.500" />
      </svg>
      <SpeedSlider />
      <svg viewBox="0 0 20 14" className="ml-[11px] h-[13px] w-[19px] fill-none stroke-[#9c9c9c] stroke-[1.600]">
        <path d="M1.500 1v12M18.500 1v12M4 7h12M7 4L4 7l3 3M13 4l3 3-3 3" />
      </svg>
      <RangeSlider label="Bandwidth" initial={38} className="ml-1 w-[84px]" />
      <svg viewBox="0 0 22 22" className="ml-[11px] h-[22px] w-[22px]">
        <circle cx="11" cy="5.500" r="4.500" fill="#ff2626" />
        <circle cx="5" cy="16" r="4.500" fill="#40f000" />
        <circle cx="17" cy="16" r="4.500" fill="#1c28ff" />
      </svg>
      <PopUp label="Palette" options={["Purple", "Blue"]} className="ml-1 w-[118px] bg-[#5e5e5e]" />
      <Checker />
      <PopUp label="Interpolation" options={["Smooth", "Sharp"]} className="ml-[5px] w-[106px] bg-[#5e5e5e]" />
      <BsCircleHalf className="ml-[12px] size-[18px] -scale-x-100 text-[#a8a8a8]" />
      <RangeSlider label="Contrast" initial={66} className="ml-[6px] w-[84px]" />
      <span className="w-[80px] text-right">676.5</span>
    </footer>
  );
}

function SpeedSlider() {
  const [value, setValue] = useState(0);
  return (
    <input
      type="range"
      aria-label="Speed"
      min={0}
      max={2}
      value={value}
      onChange={(e) => setValue(Number(e.target.value))}
      className="ml-[5px] h-[19px] w-[64px] appearance-none bg-[linear-gradient(#424242,#424242),linear-gradient(#4a4a4a,#4a4a4a),linear-gradient(#4a4a4a,#4a4a4a)] bg-[length:100%_3px,2px_9px,2px_9px] bg-[position:center,32px_center,right_center] bg-no-repeat [&::-webkit-slider-thumb]:h-[19px] [&::-webkit-slider-thumb]:w-[10px] [&::-webkit-slider-thumb]:appearance-none [&::-webkit-slider-thumb]:rounded-[5px] [&::-webkit-slider-thumb]:bg-[#9a9a9a]"
    />
  );
}

interface RangeSliderProps {
  label: string;
  initial: number;
  className: string;
}

function RangeSlider({ label, initial, className }: RangeSliderProps) {
  const [value, setValue] = useState(initial);
  return (
    <input
      type="range"
      aria-label={label}
      value={value}
      onChange={(e) => setValue(Number(e.target.value))}
      style={{
        backgroundImage: `linear-gradient(to right, #f5820f ${value}%, #404040 ${value}%)`,
      }}
      className={`h-[18px] appearance-none bg-[length:100%_5px] bg-center bg-no-repeat [&::-webkit-slider-thumb]:size-[18px] [&::-webkit-slider-thumb]:appearance-none [&::-webkit-slider-thumb]:rounded-full [&::-webkit-slider-thumb]:bg-[#9a9a9a] ${className}`}
    />
  );
}

function Checker() {
  return (
    <svg viewBox="0 0 18 18" className="ml-[10px] size-[18px] fill-[#b0b0b0]">
      <path d="M0 1h4v4h-4zM5 0h2v2h-2zM8 1h3v3h-3zM12 0h2v2h-2zM15 2h3v3h-3zM4 5h3v3h-3zM11 5h3v3h-3zM7 8h4v3h-4zM14 7h3v2h-3zM4 8h2v2h-2zM0 12h5v5h-5zM8 11h3v3h-3zM13 11h3v3h-3zM5 14h2v3h-2zM14 14h4v4h-4z" />
    </svg>
  );
}

function ArrowToLine() {
  return (
    <svg viewBox="0 0 18 20" className="h-[19px] w-[17px] fill-current">
      <path d="M7.800 1h2.400v7.500h4.600L9 14.500 3.200 8.500h4.600zM2 16.200h14v2.600H2z" />
    </svg>
  );
}

function CheckBadge({ className }: { className: string }) {
  return (
    <svg viewBox="0 0 20 20" className={className}>
      <circle cx="10" cy="10" r="9" className="fill-current" />
      <path d="M6 10.500l3 3.200L14.200 6.500" className="fill-none stroke-[#3c3c3c] stroke-2" />
    </svg>
  );
}

function Pulse() {
  return (
    <svg viewBox="0 0 20 18" className="h-[17px] w-[18px] fill-none stroke-current stroke-[1.700]">
      <path d="M1 9.500h4.500L7.500 5l2.500 11L12 2l2 7.500h5" strokeLinejoin="round" strokeLinecap="round" />
    </svg>
  );
}

function RepeatPlus() {
  return (
    <svg viewBox="0 0 20 20" className="size-[18px] fill-none stroke-current stroke-[1.600]">
      <path d="M12.800 3A7.500 7.500 0 1 0 17.400 8.500M10 6.500v7M6.500 10h7" strokeLinecap="round" />
      <path d="M13 5.500L17.500 1.500 17.500 6z" className="fill-current" />
    </svg>
  );
}
